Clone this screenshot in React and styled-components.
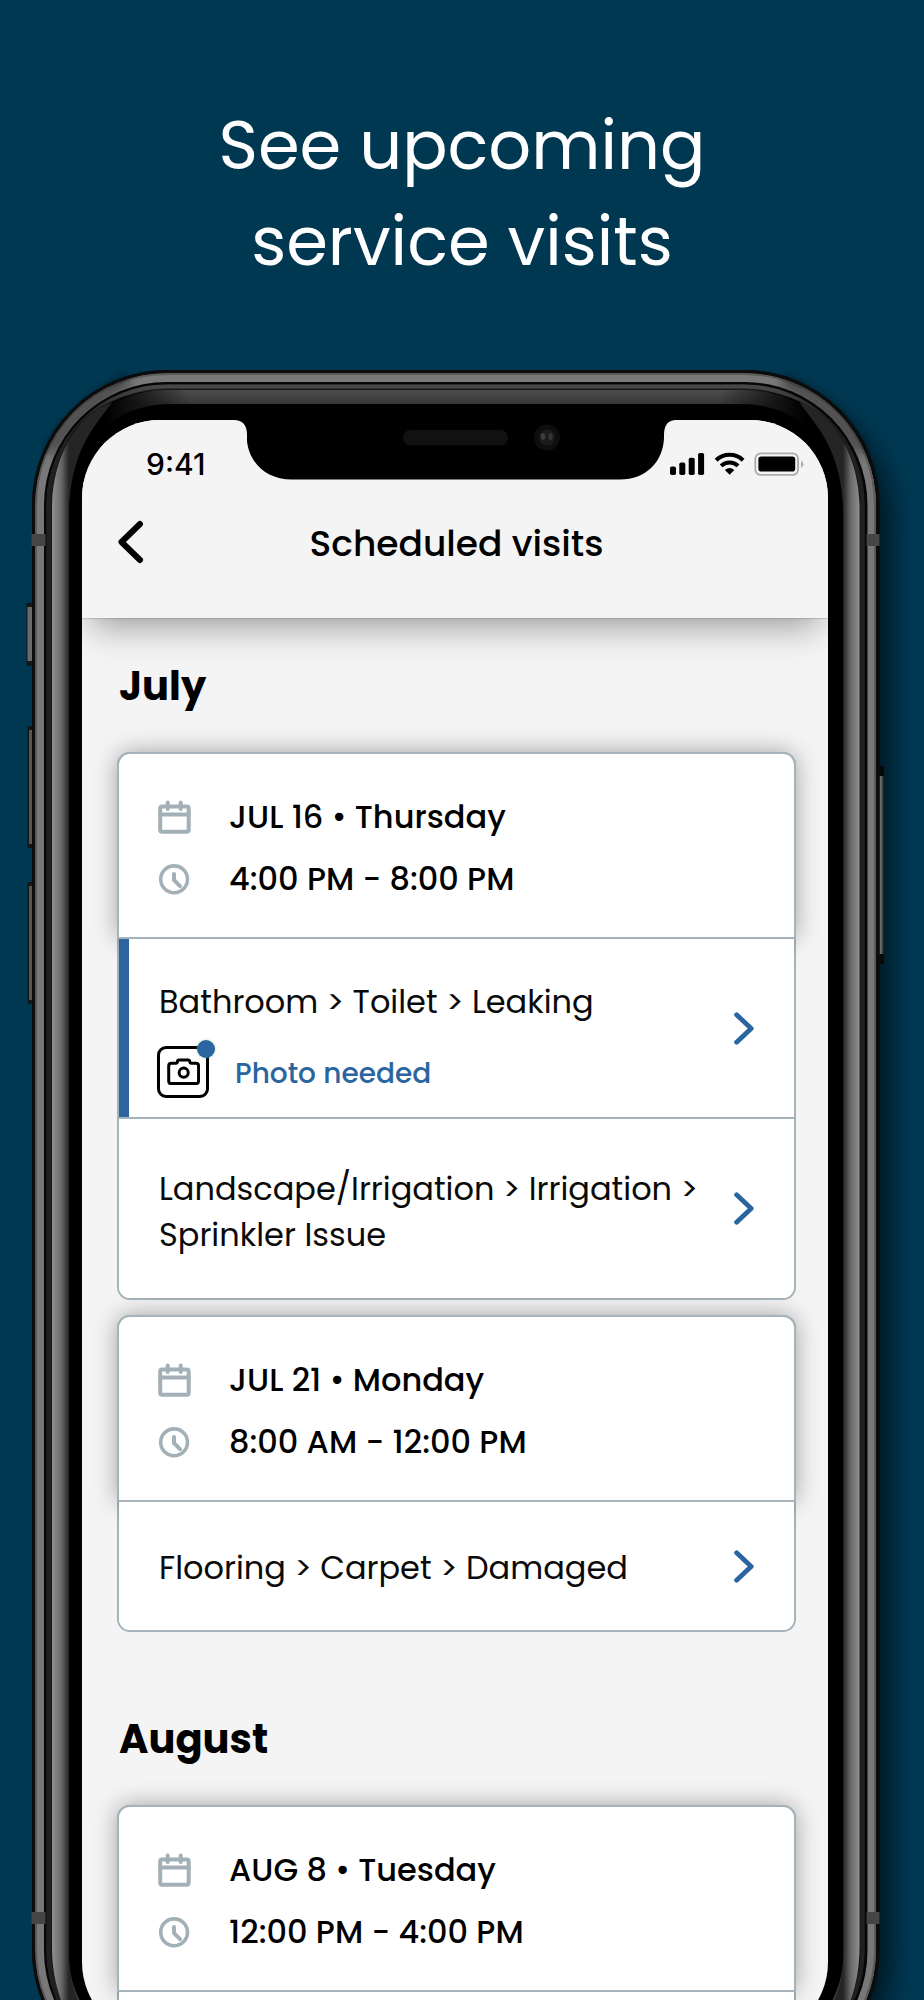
import React from "react";
import styled, { createGlobalStyle } from "styled-components";

const colors = {
  navy: "#003852",
  blue: "#2b659f",
  line: "#a5b3ba",
  icon: "#a3b0b7",
  surface: "#f4f4f4",
};

const GlobalStyle = createGlobalStyle`
  *, *::before, *::after { box-sizing: border-box; }
  body { margin: 0; background: ${colors.navy}; }
`;

const Page = styled.main`
  width: 924px;
  height: 2000px;
  overflow: hidden;
  background: ${colors.navy};
  color: #000;
  font-family: Poppins, Inter, sans-serif;
`;

const Text = styled.span`
  display: block;
  white-space: nowrap;
`;

const Headline = styled.h1`
  margin: 0;
  padding-top: 98px;
  color: #fff;
  font-size: 67.2px;
  font-weight: 400;
  line-height: 96px;
  text-align: center;
`;

const Phone = styled.section`
  position: relative;
  width: 847px;
  height: 1715px;
  margin: 80px 0 0 32px;
  padding: 50px 51px 45px 50px;
`;

const FrameArt = styled.svg`
  position: absolute;
  left: -32px;
  top: -20px;
  pointer-events: none;
`;

const Screen = styled.div`
  position: relative;
  height: 1620px;
  border-radius: 78px;
  overflow: hidden;
  background: ${colors.surface};
`;

const AppHeader = styled.header`
  position: relative;
  height: 198px;
  padding-top: 27px;
  background: ${colors.surface};
  box-shadow: 0 19px 32px -10px rgba(0, 0, 0, 0.36), 0 1px 1px rgba(80, 100, 100, 0.2);
`;

const StatusBar = styled.div`
  display: flex;
  align-items: center;
  justify-content: space-between;
  height: 34px;
  padding: 0 24px 0 64px;
  font-family: Inter, sans-serif;
  font-size: 30px;
  font-weight: 500;
  line-height: 34px;
`;

const NavBar = styled.div`
  display: grid;
  grid-template-columns: 60px 1fr 60px;
  align-items: center;
  height: 60px;
  margin-top: 33px;
  padding: 0 33px 0 36px;
`;

const BackButton = styled.button`
  display: flex;
  margin: -5px 0 0;
  padding: 0;
  border: 0;
  background: none;
`;

const NavTitle = styled.h2`
  margin: 0;
  font-size: 36px;
  font-weight: 500;
  line-height: 60px;
  text-align: center;
`;

const Visits = styled.div`
  padding: 44px 32px 0 35px;
`;

const Month = styled.h3`
  margin: ${(p) => (p.$first ? 0 : 83)}px 0 42px;
  padding-left: 2px;
  font-size: 40px;
  font-weight: 700;
  line-height: 48px;
`;

const CardList = styled.div`
  display: flex;
  flex-direction: column;
  gap: 15px;
`;

const Card = styled.article`
  border: 2px solid ${colors.line};
  border-radius: 13px;
  background: #fff;
`;

const CardHead = styled.div`
  height: 183px;
  padding: 32px 0 0 39px;
  border-radius: 11px 11px 0 0;
  background: #fff;
  box-shadow: 0 0 0 2px ${colors.line}, 0 0 25px 1px rgba(0, 0, 0, 0.37);
`;

const When = styled.div`
  display: grid;
  grid-template-columns: 32px 1fr;
  column-gap: 39px;
  align-items: center;
  height: 62px;
  font-size: 32px;
  font-weight: 500;
`;

const IssueRow = styled.div`
  position: relative;
  display: flex;
  align-items: center;
  justify-content: space-between;
  height: ${(p) => p.$height}px;
  padding: 0 40px;
  border-top: 2px solid ${colors.line};
  border-radius: ${(p) => (p.$last ? "0 0 11px 11px" : "0")};
  background: #fff;
`;

const FlagBar = styled.div`
  flex: none;
  align-self: stretch;
  width: 10px;
  margin: 0 30px 0 -40px;
  background: ${colors.blue};
`;

const IssueBody = styled.div`
  flex: 1;
  align-self: flex-start;
  padding-top: ${(p) => p.$top}px;
  color: #0a0a0a;
  font-size: 32px;
  line-height: 46.4px;
`;

const PhotoAction = styled.div`
  display: flex;
  align-items: center;
  gap: 26px;
  margin: 20px 0 0 -2px;
  color: ${colors.blue};
  font-size: 28px;
  font-weight: 500;

  ${Text} {
    padding-top: 6px;
  }
`;

const CameraTile = styled.div`
  position: relative;
  display: flex;
  align-items: center;
  justify-content: center;
  width: 52px;
  height: 52px;
  border: 3px solid #000;
  border-radius: 9px;
`;

const Dot = styled.i`
  position: absolute;
  top: -9px;
  right: -9px;
  width: 18px;
  height: 18px;
  border-radius: 50%;
  background: ${colors.blue};
  box-shadow: 0 0 3px rgba(110, 190, 120, 0.5);
`;

const CalendarIcon = () => (
  <svg width="33" height="34" viewBox="0 0 33 34" fill="none" stroke={colors.icon} strokeWidth="4" strokeLinecap="round" strokeLinejoin="round">
    <rect x="2.2" y="6.5" width="28.5" height="25.2" rx="2" />
    <path d="M2.2 14.500h28.500M9.700 2.500v6.500M22.700 2.500v6.500" />
  </svg>
);

const ClockIcon = () => (
  <svg width="32" height="32" viewBox="0 0 32 32" fill="none" stroke={colors.icon} strokeWidth="3.6" strokeLinecap="round" strokeLinejoin="round">
    <circle cx="16.1" cy="16.3" r="13.4" />
    <path d="M16 11v6.200l6 6" strokeWidth="4" />
  </svg>
);

const CameraIcon = () => (
  <svg width="33" height="29" viewBox="0 0 34 30" fill="none" stroke="#000" strokeWidth="3.1" strokeLinejoin="round">
    <path d="M12.2 3.2h9.8q1.3 0 1.5 1.3q.2 2 1.7 2h4.6q2.8 0 2.8 2.8v15.4q0 2.8-2.8 2.8H4.5q-2.8 0-2.8-2.8V9.3q0-2.800 2.800-2.800h4.600q1.500 0 1.700-2q.1-1.300 1.400-1.300z" />
    <circle cx="17.2" cy="16.2" r="4.7" />
  </svg>
);

const Chevron = () => (
  <svg width="20" height="33" viewBox="0 0 20 33" fill="none" stroke={colors.blue} strokeWidth="4.8" strokeLinecap="round" strokeLinejoin="round">
    <path d="M2.600 2.800L17.200 16.500L2.600 30.200" />
  </svg>
);

const BackIcon = () => (
  <svg width="26" height="44" viewBox="0 0 26 44" fill="none" stroke="#000" strokeWidth="6" strokeLinecap="round" strokeLinejoin="round">
    <path d="M22 4L3.500 22L22 40" />
  </svg>
);

const StatusIcons = () => (
  <svg width="134" height="24" viewBox="0 0 134 24">
    <rect x="0" y="14.5" width="6" height="8.5" rx="1.8" />
    <rect x="9.3" y="10.5" width="6" height="12.5" rx="1.8" />
    <rect x="18.7" y="5.8" width="6" height="17.2" rx="1.8" />
    <rect x="28.1" y="1" width="6" height="22" rx="1.8" />
    <g fill="none" stroke="#000" strokeWidth="4">
      <path d="M46.1 8.300a19.500 19.500 0 0 1 27 0" />
      <path d="M51.200 13.900a12 12 0 0 1 16.800 0" />
    </g>
    <path d="M54.900 18q4.700-3.800 9.400 0L59.600 22.800z" />
    <rect x="85.300" y="1.300" width="42.800" height="21.600" rx="5.500" fill="none" stroke="#ababab" strokeWidth="1.800" />
    <rect x="88.400" y="4.400" width="36.800" height="15.200" rx="2.800" />
    <path d="M131 8.700q2.400 1 2.400 3.600t-2.400 3.600z" fill="#ababab" />
  </svg>
);

/* The handset body; drawn in page-wide coordinates shifted up by 350px. */
const PhoneFrame = () => (
  <FrameArt width="924" height="1780" viewBox="0 350 924 1780">
    <defs>
      <linearGradient id="topBand" x1="0" x2="0" y1="390" y2="404" gradientUnits="userSpaceOnUse">
        <stop offset="0" stopColor="#4d4d4d" />
        <stop offset="1" stopColor="#363636" />
      </linearGradient>
      <linearGradient id="lipFade" x1="0" x2="0" y1="387" y2="415" gradientUnits="userSpaceOnUse">
        <stop offset="0" stopColor="#474747" />
        <stop offset="1" stopColor="#202020" />
      </linearGradient>
      <linearGradient id="leftBand" x1="52" x2="69" y1="0" y2="0" gradientUnits="userSpaceOnUse">
        <stop offset="0" stopColor="#909090" />
        <stop offset="0.55" stopColor="#686868" />
        <stop offset="1" stopColor="#252525" />
      </linearGradient>
      <linearGradient id="rightBand" x1="860" x2="843" y1="0" y2="0" gradientUnits="userSpaceOnUse">
        <stop offset="0" stopColor="#929292" />
        <stop offset="0.55" stopColor="#686868" />
        <stop offset="1" stopColor="#252525" />
      </linearGradient>
      <linearGradient id="fadeL" x1="105" x2="190" y1="0" y2="0" gradientUnits="userSpaceOnUse">
        <stop offset="0" stopColor="#000" />
        <stop offset="1" stopColor="#000" stopOpacity="0" />
      </linearGradient>
      <linearGradient id="fadeR" x1="806" x2="721" y1="0" y2="0" gradientUnits="userSpaceOnUse">
        <stop offset="0" stopColor="#000" />
        <stop offset="1" stopColor="#000" stopOpacity="0" />
      </linearGradient>
      <linearGradient id="key" x1="0" x2="1" y1="0" y2="0">
        <stop offset="0" stopColor="#333" />
        <stop offset="0.5" stopColor="#6c6c6c" />
        <stop offset="1" stopColor="#333" />
      </linearGradient>
      <filter id="soft" x="-10%" y="-10%" width="120%" height="120%">
        <feGaussianBlur stdDeviation="13" />
      </filter>
      <filter id="glint" x="-20%" y="-20%" width="140%" height="140%">
        <feGaussianBlur stdDeviation="5" />
      </filter>
    </defs>

    <rect x="60" y="395" width="831" height="1690" rx="125" fill="#000" opacity="0.6" filter="url(#soft)" />

    <rect x="26.500" y="603" width="8" height="63" rx="2" fill="#151515" />
    <rect x="27.500" y="607" width="5" height="54" fill="#6a6a6a" />
    <rect x="27.500" y="726" width="8" height="122" rx="2" fill="#151515" />
    <rect x="29" y="730" width="5.500" height="114" fill="#565656" />
    <rect x="27.500" y="882" width="8" height="122" rx="2" fill="#151515" />
    <rect x="29" y="886" width="5.500" height="114" fill="#565656" />
    <rect x="876" y="766" width="8" height="198" rx="2" fill="#080808" />
    <rect x="877.500" y="776" width="6" height="178" fill="url(#key)" />

    <rect x="32" y="370" width="847.500" height="1715" rx="135" fill="#0c0c0c" />
    <rect x="35" y="373" width="841" height="1709" rx="132" fill="#787878" />
    <rect x="36" y="374" width="839" height="1707" rx="131" fill="none" stroke="#5a5a5a" strokeWidth="2" />
    <path d="M50 452Q75 408 128 380" fill="none" stroke="#111" strokeWidth="12" opacity="0.45" filter="url(#glint)" />
    <path d="M861.500 452Q836 408 783 380" fill="none" stroke="#111" strokeWidth="12" opacity="0.45" filter="url(#glint)" />
    <rect x="33.500" y="371.500" width="844.500" height="1712" rx="133.500" fill="none" stroke="#0c0c0c" strokeWidth="3" />
    <rect x="44" y="382" width="823.500" height="1692" rx="123" fill="#060606" />
    <rect x="46.500" y="384.500" width="818" height="1687" rx="120" fill="#202020" />
    <rect x="48.500" y="386.500" width="814" height="1683" rx="118" fill="none" stroke="url(#lipFade)" strokeWidth="4" />
    <rect x="51" y="389" width="809.500" height="1678" rx="116" fill="#161616" />
    <rect x="52" y="390" width="807.500" height="1676" rx="115" fill="url(#topBand)" />
    <path d="M52 505Q55 428 110 402Q135 390 167 390H200L190 410L80 460L66 505Z" fill="url(#fadeL)" />
    <path d="M859.500 505Q856 428 801 402Q776 390 744 390H711L721 410L831 460L845 505Z" fill="url(#fadeR)" />
    <rect x="68.500" y="404" width="775" height="1650" rx="100" fill="#000" />
    <path d="M52 505C53 458 75 415 112 402C98 424 70 446 69 515V1950C69 2000 90 2030 110 2045L90 2045C66 2020 52 1990 52 1945Z" fill="url(#leftBand)" />
    <path d="M859.500 505C858.500 458 836.500 415 799.500 402C813.500 424 842.500 446 843.500 515V1950C843.500 2000 822 2030 802 2045L822 2045C846 2020 859.500 1990 859.500 1945Z" fill="url(#rightBand)" />

    <rect x="31.500" y="534" width="14" height="12" fill="#454545" />
    <rect x="866.500" y="534" width="13" height="12" fill="#454545" />
    <rect x="31.500" y="1912" width="14" height="12" fill="#454545" />
    <rect x="866.500" y="1912" width="13" height="12" fill="#454545" />
  </FrameArt>
);

const Notch = () => (
  <FrameArt width="924" height="200" viewBox="0 350 924 200">
    <path d="M234 419V420Q246.500 420 247 434V441C249 462 266 479.500 292 479.500H620C646 479.500 663 462 664 438V434Q664.500 420 676 420V419Z" />
    <rect x="403" y="430" width="105" height="15.500" rx="7.700" fill="#111" />
    <circle cx="547" cy="437.500" r="13" fill="#0e0e0e" />
    <circle cx="547" cy="437.500" r="8" fill="#1b1b1b" />
    <ellipse cx="543" cy="436.500" rx="2.200" ry="3.500" fill="#3e3e3e" />
    <ellipse cx="550.500" cy="436.500" rx="2.200" ry="3.500" fill="#343434" />
  </FrameArt>
);

const months = [
  {
    name: "July",
    visits: [
      {
        date: "JUL 16 • Thursday",
        time: "4:00 PM - 8:00 PM",
        issues: [
          { lines: ["Bathroom > Toilet > Leaking"], photo: true, height: 180, top: 40 },
          { lines: ["Landscape/Irrigation > Irrigation >", "Sprinkler Issue"], height: 181, top: 46.5 },
        ],
      },
      {
        date: "JUL 21 • Monday",
        time: "8:00 AM - 12:00 PM",
        issues: [{ lines: ["Flooring > Carpet > Damaged"], height: 130, top: 42.5 }],
      },
    ],
  },
  {
    name: "August",
    visits: [
      {
        date: "AUG 8 • Tuesday",
        time: "12:00 PM - 4:00 PM",
        issues: [{ lines: [], height: 130, top: 42 }],
      },
    ],
  },
];

function Issue({ issue, last }) {
  return (
    <IssueRow $height={issue.height} $last={last}>
      {issue.photo && <FlagBar />}
      <IssueBody $top={issue.top}>
        {issue.lines.map((line) => (
          <Text key={line}>{line}</Text>
        ))}
        {issue.photo && (
          <PhotoAction>
            <CameraTile>
              <CameraIcon />
              <Dot />
            </CameraTile>
            <Text>Photo needed</Text>
          </PhotoAction>
        )}
      </IssueBody>
      <Chevron />
    </IssueRow>
  );
}

function Visit({ visit }) {
  return (
    <Card>
      <CardHead>
        <When>
          <CalendarIcon />
          <Text>{visit.date}</Text>
        </When>
        <When>
          <ClockIcon />
          <Text>{visit.time}</Text>
        </When>
      </CardHead>
      {visit.issues.map((issue, i) => (
        <Issue key={i} issue={issue} last={i === visit.issues.length - 1} />
      ))}
    </Card>
  );
}

export default function App() {
  return (
    <Page>
      <GlobalStyle />
      <Headline>
        <Text>See upcoming</Text>
        <Text>service visits</Text>
      </Headline>
      <Phone>
        <PhoneFrame />
        <Screen>
          <AppHeader>
            <StatusBar>
              <Text>9:41</Text>
              <StatusIcons />
            </StatusBar>
            <NavBar>
              <BackButton aria-label="Back">
                <BackIcon />
              </BackButton>
              <NavTitle>Scheduled visits</NavTitle>
            </NavBar>
          </AppHeader>
          <Visits>
            {months.map((month, i) => (
              <React.Fragment key={month.name}>
                <Month $first={i === 0}>{month.name}</Month>
                <CardList>
                  {month.visits.map((visit) => (
                    <Visit key={visit.date} visit={visit} />
                  ))}
                </CardList>
              </React.Fragment>
            ))}
          </Visits>
        </Screen>
        <Notch />
      </Phone>
    </Page>
  );
}
